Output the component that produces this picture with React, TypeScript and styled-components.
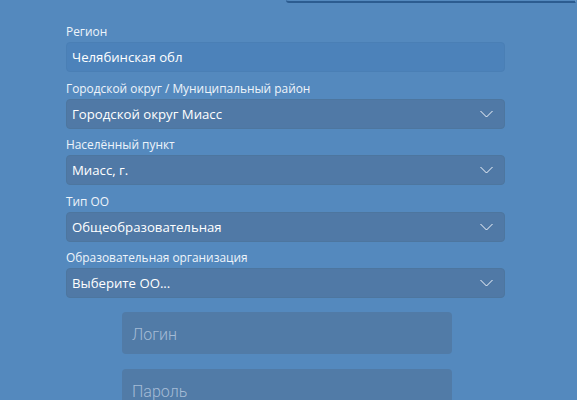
import React from 'react'
import styled, { createGlobalStyle } from 'styled-components';

const Global = createGlobalStyle`
  html, body {
    margin: 0;
    padding: 0;
    background: #5489be;
    font-family: "Open Sans", "Noto Sans", sans-serif;
  }
`;

const Page = styled.div`
  width: 577px;
  height: 400px;
  overflow: hidden;
  background: #5489be;
`;

const TopPanel = styled.div`
  margin-left: 286px;
  width: 289px;
  height: 1px;
  border-bottom: 2px solid #2c5c90;
  border-right: 1px solid #6a98c6;
  border-bottom-left-radius: 3px;
`;

const Form = styled.div`
  margin: 21px 0 0 66px;
  width: 439px;
  display: flex;
  flex-direction: column;
  gap: 8.5px;
`;

const Field = styled.div`
  display: flex;
  flex-direction: column;
  gap: 3px;
`;

const Label = styled.label`
  font-size: 11.9px;
  line-height: 15px;
  color: #eef4fa;
`;

const Control = styled.div<{ $select?: boolean }>`
  box-sizing: border-box;
  height: 30px;
  display: flex;
  align-items: center;
  justify-content: space-between;
  padding: 0 11px 0 5px;
  border-radius: 4px;
  border: 1px solid ${p => (p.$select ? '#4d769f' : '#4a7fb5')};
  background: ${p => (p.$select ? '#5079a6' : '#4c82ba')};
  color: #ffffff;
  font-size: 13.2px;
`;

const Chevron = () => (
  <svg width="13" height="8" viewBox="0 0 13 8">
    <path d="M0.5 1 L6.5 7 L12.5 1" fill="none" stroke="#f2f6fb" strokeWidth="1" />
  </svg>
);

const Auth = styled.div`
  margin: 13.5px 0 0 122px;
  width: 330px;
  display: flex;
  flex-direction: column;
  gap: 15px;
`;

const AuthInput = styled.div`
  box-sizing: border-box;
  height: 42px;
  display: flex;
  align-items: center;
  padding: 4px 0 0 10px;
  border-radius: 4px;
  background: #517ba7;
  color: #a5bcd6;
  font-family: Roboto, "Noto Sans", sans-serif;
  font-weight: 300;
  font-size: 16px;
`;

const selects = [
  { label: 'Городской округ / Муниципальный район', value: 'Городской округ Миасс' },
  { label: 'Населённый пункт', value: 'Миасс, г.' },
  { label: 'Тип ОО', value: 'Общеобразовательная' },
  { label: 'Образовательная организация', value: 'Выберите ОО...' },
];

const App = () => {
  return (
    <Page>
      <Global />
      <TopPanel />
      <Form>
        <Field>
          <Label>Регион</Label>
          <Control>Челябинская обл</Control>
        </Field>
        {selects.map(s => (
          <Field key={s.label}>
            <Label>{s.label}</Label>
            <Control $select>
              {s.value}
              <Chevron />
            </Control>
          </Field>
        ))}
      </Form>
      <Auth>
        <AuthInput>Логин</AuthInput>
        <AuthInput>Пароль</AuthInput>
      </Auth>
    </Page>
  )
}

export default App
